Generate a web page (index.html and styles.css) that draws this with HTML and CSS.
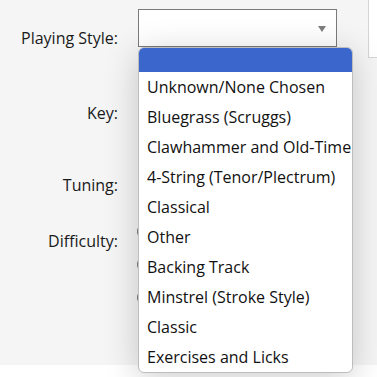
FILE: index.html
```html
<!DOCTYPE html>
<html lang="en">
<head>
    <meta charset="UTF-8">
    <meta name="viewport" content="width=device-width, initial-scale=1.0">
    <title>Add Tab</title>
    <link rel="stylesheet" href="styles.css">
</head>
<body>
    <div class="page">
        <main class="main">
            <form class="tab-form">
                <!-- Playing Style -->
                <div class="form-row row-style">
                    <label class="form-label">Playing Style:</label>
                    <div class="form-control">
                        <div class="select-box">
                            <span class="select-arrow"></span>
                        </div>

                        <!-- open dropdown list -->
                        <ul class="dropdown">
                            <li class="dropdown-item selected"></li>
                            <li class="dropdown-item">Unknown/None Chosen</li>
                            <li class="dropdown-item">Bluegrass (Scruggs)</li>
                            <li class="dropdown-item">Clawhammer and Old-Time</li>
                            <li class="dropdown-item">4-String (Tenor/Plectrum)</li>
                            <li class="dropdown-item">Classical</li>
                            <li class="dropdown-item">Other</li>
                            <li class="dropdown-item">Backing Track</li>
                            <li class="dropdown-item">Minstrel (Stroke Style)</li>
                            <li class="dropdown-item">Classic</li>
                            <li class="dropdown-item">Exercises and Licks</li>
                        </ul>
                    </div>
                </div>

                <!-- Key -->
                <div class="form-row row-key">
                    <label class="form-label">Key:</label>
                    <div class="form-control">
                        <div class="select-box"></div>
                    </div>
                </div>

                <!-- Tuning -->
                <div class="form-row row-tuning">
                    <label class="form-label">Tuning:</label>
                    <div class="form-control">
                        <div class="select-box"></div>
                    </div>
                </div>

                <!-- Difficulty -->
                <div class="form-row row-difficulty">
                    <label class="form-label">Difficulty:</label>
                    <div class="form-control radios">
                        <span class="radio"></span>
                        <span class="radio"></span>
                        <span class="radio"></span>
                    </div>
                </div>
            </form>
        </main>

        <aside class="sidebar">
            <div class="side-card"></div>
        </aside>
    </div>
    <footer class="footer"></footer>
</body>
</html>
```

FILE: styles.css
```css
/* General Styles */
html, body {
    min-height: 377px;
}

body {
    font-family: "Open Sans", "Liberation Sans", Arial, sans-serif;
    font-size: 16px;
    margin: 0;
    padding: 0;
    background-color: #fff;
    color: #1a1a1a;
}

.page {
    display: flex;
    height: 365px;
    background-color: #f5f5f5;
}

.footer {
    height: 12px;
    background: #fff;
}

.main {
    width: 368px;
    flex-shrink: 0;
}

/* Sidebar */
.sidebar {
    flex: 1;
}

.side-card {
    height: 57px;
    margin-top: -1px;
    margin-right: -2px;
    background: #fff;
    border: 1px solid #d4d4d4;
}

/* Form */
.tab-form {
    padding-top: 9px;
}

.form-row {
    display: grid;
    grid-template-columns: 118px 199px;
    column-gap: 20px;
    line-height: 24px;
}

.form-label {
    text-align: right;
    padding-top: 17px;
}

.form-control {
    position: relative;
}

.row-key {
    margin-top: 34px;
}

.row-tuning {
    margin-top: 31px;
}

.row-difficulty {
    margin-top: 15px;
}

.select-box {
    height: 36px;
    background: #fff;
    border: 1px solid #7a7a7a;
    position: relative;
}

.select-arrow {
    position: absolute;
    right: 10px;
    top: 16px;
    width: 0;
    height: 0;
    border-left: 4px solid transparent;
    border-right: 4px solid transparent;
    border-top: 6px solid #7d7d7d;
}

/* Radios behind the dropdown */
.radios {
    display: flex;
    flex-direction: column;
    gap: 18px;
    margin-left: -1px;
    padding-top: 12px;
}

.radio {
    width: 13px;
    height: 13px;
    border: 1px solid #666;
    border-radius: 50%;
    background: #fff;
}

/* Dropdown */
.dropdown {
    position: absolute;
    top: 38px;
    left: 0;
    z-index: 10;
    width: 215px;
    margin: 0;
    padding: 0;
    list-style: none;
    background: #fff;
    border: 1px solid #bdbdbd;
    border-radius: 6px;
    overflow: hidden;
    box-shadow: 0 6px 34px rgba(0, 0, 0, 0.2);
    box-sizing: border-box;
}

.dropdown-item {
    height: 30px;
    line-height: 30px;
    padding-left: 8px;
    white-space: nowrap;
    color: #111;
}

.dropdown-item.selected {
    height: 24px;
    background-color: #3b67cc;
}
```
